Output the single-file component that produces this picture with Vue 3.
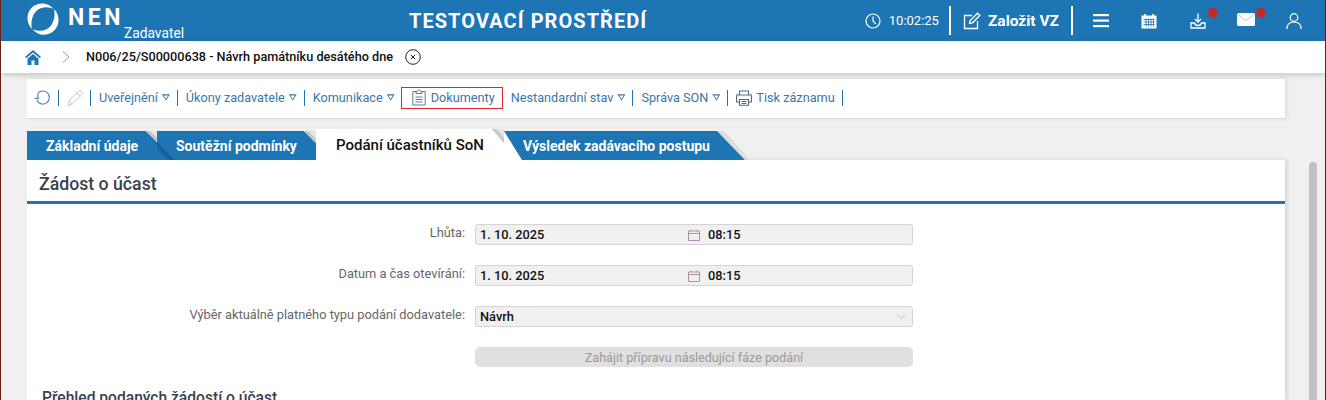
<template>
  <div class="page">
    <header class="topbar">
      <div class="brand">
        <svg class="brand__logo" viewBox="0 0 32 32" width="32" height="32">
          <path d="M17 0.500C9 -0.500 1 5 0.500 14C0.200 19 2 23 5 26C3.800 21 4.500 14 8 9.500C10.500 6.300 14 4.200 19 4.200C22 4.200 24.500 5 26.500 6C24 3 21 1 17 0.500Z" fill="#fff" />
          <path d="M15 31.700C23 32.500 31 27 31.500 18C31.800 13 30 9 27 6C28.200 11 27.500 18 24 22.500C21.500 25.700 18 27.800 13 27.800C10 27.800 7.500 27 5.500 26C8 29 11 31.300 15 31.700Z" fill="#fff" />
        </svg>
        <span class="brand__name">NEN</span>
        <span class="brand__role">Zadavatel</span>
      </div>
      <div class="topbar__env">TESTOVACÍ PROSTŘEDÍ</div>
      <div class="topbar__tools">
        <div class="clock">
          <svg viewBox="0 0 16 16" width="16" height="16" fill="none" stroke="#fff" stroke-width="1.200">
            <circle cx="8" cy="8" r="7" />
            <path d="M8 3.500V8l3 3.200" />
          </svg>
          <span>10:02:25</span>
        </div>
        <div class="create">
          <svg viewBox="0 0 18 18" width="18" height="18" fill="none" stroke="#fff" stroke-width="1.300">
            <path d="M9 3.500H1.500V16.500H14.500V9" />
            <path d="M6.500 11.500L7.200 8.500L14.500 1.200L16.800 3.500L9.500 10.800Z" />
          </svg>
          <span>Založit VZ</span>
        </div>
        <svg class="tool tool--menu" viewBox="0 0 16 14" width="16" height="14" fill="#fff">
          <rect x="0" y="0" width="16" height="2.200" />
          <rect x="0" y="5.500" width="16" height="2.200" />
          <rect x="0" y="11" width="16" height="2.200" />
        </svg>
        <svg class="tool tool--cal" viewBox="0 0 16 16" width="16" height="16">
          <path d="M0.500 2.500H3V1H5V2.500H11V1H13V2.500H15.500V15.500H0.500Z" fill="#fff" />
          <path d="M2.500 6.500H13.500M2.500 9H13.500M2.500 11.500H13.500M5 5.500V13.500M7.500 5.500V13.500M10 5.500V13.500M12.500 5.500V13.500" stroke="#1e75b4" stroke-width="0.800" fill="none" />
        </svg>
        <div class="tool tool--badge tool--download">
          <svg viewBox="0 0 16 16" width="16" height="16" fill="none" stroke="#fff" stroke-width="1.300">
            <path d="M8 0.500V8.500M5 6l3 3 3-3" />
            <path d="M1 10V15H15V10H11.500C11 11.800 10 12.500 8 12.500C6 12.500 5 11.800 4.500 10Z" />
          </svg>
          <i class="dot"></i>
        </div>
        <div class="tool tool--badge tool--mail">
          <svg viewBox="0 0 18 13" width="18" height="13">
            <rect width="18" height="13" rx="1.500" fill="#fff" />
            <path d="M0.500 1.500L9 7.500L17.500 1.500" fill="none" stroke="#a9cbe4" stroke-width="1" />
          </svg>
          <i class="dot"></i>
        </div>
        <svg class="tool tool--user" viewBox="0 0 16 16" width="16" height="16" fill="none" stroke="#fff" stroke-width="1.200">
          <circle cx="8" cy="4.500" r="3.800" />
          <path d="M0.800 16C1 11.500 4 9 8 9C12 9 15 11.500 15.200 16" />
        </svg>
      </div>
    </header>

    <div class="crumbs">
      <svg class="crumbs__home" viewBox="0 0 16 15" width="16" height="15">
        <path d="M8 0L0 7L1.200 8.300L8 2.400L14.800 8.300L16 7Z" fill="#1e75b4" />
        <path d="M2.500 8.800L8 4L13.500 8.800V15H9.500V10.500H6.500V15H2.500Z" fill="#1e75b4" />
      </svg>
      <svg class="crumbs__sep" viewBox="0 0 8 12" width="8" height="12" fill="none" stroke="#8f9aa5" stroke-width="1">
        <path d="M1 0.500L7 6L1 11.500" />
      </svg>
      <span class="crumbs__title">N006/25/S00000638 - Návrh památníku desátého dne</span>
      <svg class="crumbs__close" viewBox="0 0 16 16" width="16" height="16" fill="none" stroke="#222" stroke-width="1">
        <circle cx="8" cy="8" r="7.300" />
        <path d="M5.800 5.800L10.200 10.200M10.200 5.800L5.800 10.200" />
      </svg>
    </div>

    <main class="content">
      <nav class="toolbar">
        <svg class="toolbar__icon" viewBox="0 0 17 16" width="17" height="16" fill="none" stroke="#4a7db0" stroke-width="1.100">
          <path d="M4 3.200A6.500 6.500 0 1 1 2.800 10" />
          <path d="M0.500 8.500H5M4 3.200L3.800 8.500" />
        </svg>
        <i class="bar"></i>
        <svg class="toolbar__icon" viewBox="0 0 16 16" width="16" height="16" fill="none" stroke="#c9c9c9" stroke-width="1">
          <path d="M1 15.500L2 11L11.500 1.500C12.500 0.500 14 0.500 15 1.500C15.800 2.500 15.500 3.800 14.800 4.500L5.200 14.200Z" />
          <path d="M2 11L5.200 14.200M10 3L13.300 6.300" />
        </svg>
        <i class="bar"></i>
        <a class="menu">Uveřejnění<b class="caret"></b></a>
        <i class="bar"></i>
        <a class="menu">Úkony zadavatele<b class="caret"></b></a>
        <i class="bar"></i>
        <a class="menu">Komunikace<b class="caret"></b></a>
        <a class="menu menu--doc">
          <svg viewBox="0 0 14 17" width="14" height="17" fill="none" stroke="#5c7ea6" stroke-width="1">
            <path d="M4 2.500H0.800V16H13.200V2.500H10" />
            <path d="M4 4.500V2.500H5.500C5.500 0.300 8.500 0.300 8.500 2.500H10V4.500Z" />
            <path d="M3.500 8H10.500M3.500 10.500H10.500M3.500 13H10.500" />
          </svg>
          Dokumenty
        </a>
        <a class="menu">Nestandardní stav<b class="caret"></b></a>
        <i class="bar"></i>
        <a class="menu">Správa SON<b class="caret"></b></a>
        <i class="bar"></i>
        <a class="menu menu--print">
          <svg viewBox="0 0 16 16" width="16" height="16" fill="none" stroke="#4a6d8c" stroke-width="1.100">
            <path d="M3.500 5V1H12.500V5" />
            <path d="M3.500 12H0.600V5H15.400V12H12.500" />
            <path d="M3.500 9.500H12.500V15.300H3.500Z" />
            <path d="M5.500 11.500H10.500M5.500 13.500H10.500" />
          </svg>
          Tisk záznamu
        </a>
        <i class="bar"></i>
      </nav>

      <div class="tabs">
        <div
          v-for="tab in tabs"
          :key="tab.label"
          class="tab"
          :class="{ 'tab--active': tab.active }"
          :style="{ width: tab.width + 'px', paddingLeft: tab.indent + 'px' }"
        >
          <svg class="tab__bg" :width="tab.width" :height="tab.active ? 31 : 29">
            <polygon v-for="part in tab.parts" :key="part[0]" :points="part[0]" :fill="part[1]" />
          </svg>
          <span class="tab__label">{{ tab.label }}</span>
        </div>
      </div>

      <section class="panel">
        <h2 class="panel__title">Žádost o účast</h2>
        <form class="form">
          <div class="form__row">
            <label class="form__label">Lhůta:</label>
            <div class="field">
              <span class="field__date">1. 10. 2025</span>
              <svg class="field__cal" viewBox="0 0 12 12" width="12" height="12" fill="none" stroke="#b08fa8" stroke-width="1">
                <path d="M0.500 2H11.500V11.500H0.500ZM0.500 4.500H11.500M3 0.500V2M9 0.500V2" />
              </svg>
              <span>08:15</span>
            </div>
          </div>
          <div class="form__row">
            <label class="form__label">Datum a čas otevírání:</label>
            <div class="field">
              <span class="field__date">1. 10. 2025</span>
              <svg class="field__cal" viewBox="0 0 12 12" width="12" height="12" fill="none" stroke="#b08fa8" stroke-width="1">
                <path d="M0.500 2H11.500V11.500H0.500ZM0.500 4.500H11.500M3 0.500V2M9 0.500V2" />
              </svg>
              <span>08:15</span>
            </div>
          </div>
          <div class="form__row">
            <label class="form__label">Výběr aktuálně platného typu podání dodavatele:</label>
            <div class="field field--select">
              <span>Návrh</span>
              <svg viewBox="0 0 10 6" width="10" height="6" fill="none" stroke="#bdbdbd" stroke-width="1">
                <path d="M1 0.800L5 4.800L9 0.800" />
              </svg>
            </div>
          </div>
          <div class="form__row">
            <span class="form__label"></span>
            <button type="button" class="start-btn" disabled>Zahájit přípravu následující fáze podání</button>
          </div>
        </form>
        <h3 class="panel__subtitle">Přehled podaných žádostí o účast</h3>
      </section>
    </main>

    <div class="scrollbar"></div>
  </div>
</template>

<script setup>
const blue = '#1e75b4'

// tab shapes: [points, fill], painted in order
const tabs = [
  {
    label: 'Základní údaje',
    width: 130,
    indent: 19,
    parts: [
      ['0,0 119,0 130,11 130,29 0,29', blue],
      ['119,0 130,0 130,11', '#e4e4e4'],
      ['119,0 123,0 130,7 130,11', '#c4c4c4'],
    ],
  },
  {
    label: 'Soutěžní podmínky',
    width: 159,
    indent: 19,
    parts: [
      ['0,0 147,0 159,12 159,29 0,29', blue],
      ['0,11 17,29 9,29 0,19', '#1b6ca7'],
      ['0,11 17,29 13,29 0,15', '#165c8f'],
      ['147,0 159,0 159,12', '#e4e4e4'],
      ['147,0 151,0 159,8 159,12', '#c4c4c4'],
    ],
  },
  {
    label: 'Podání účastníků SoN',
    width: 188,
    indent: 20,
    active: true,
    parts: [
      ['0,0 176,0 188,14 188,31 0,31', '#fff'],
      ['176,0 188,0 188,14', '#e4e4e4'],
      ['176,0 180,0 188,9 188,14', '#c8c8c8'],
    ],
  },
  {
    label: 'Výsledek zadávacího postupu',
    width: 241,
    indent: 19,
    parts: [
      ['0,0 18,29 0,29', '#fff'],
      ['213,0 220,0 246,29 241,29', '#dedede'],
      ['0,0 213,0 241,29 18,29', blue],
    ],
  },
]
</script>

<style>
html,
body {
  margin: 0;
  overflow: hidden;
}
</style>

<style scoped>
.page {
  position: relative;
  box-sizing: border-box;
  height: 400px;
  overflow: hidden;
  background: #f0f0f0;
  border-left: 1px solid #6b1d14;
  border-right: 1px solid #6b1d14;
  font-family: Roboto, "Liberation Sans", sans-serif;
}

.topbar {
  position: relative;
  display: flex;
  align-items: center;
  height: 41px;
  background: #1e75b4;
  color: #fff;
}

.brand {
  display: flex;
  align-items: flex-start;
  width: 360px;
  height: 41px;
  padding-left: 26px;
  box-sizing: border-box;
}

.brand__logo {
  margin-top: 3px;
}

.brand__name {
  margin: 5px 0 0 9px;
  font-size: 23px;
  line-height: 26px;
  font-weight: 700;
  letter-spacing: 3.500px;
}

.brand__role {
  margin: 25px 0 0 0;
  font-size: 13.800px;
  line-height: 16px;
}

.topbar__env {
  width: 288px;
  margin-left: 48px;
  font-size: 20px;
  font-weight: 700;
  letter-spacing: 1.050px;
  white-space: nowrap;
}

.topbar__tools {
  display: flex;
  align-items: center;
  margin-left: auto;
  height: 41px;
  padding-right: 23px;
}

.clock {
  display: flex;
  align-items: center;
  gap: 8px;
  height: 29px;
  padding-right: 10px;
  border-right: 2px solid #fff;
  font-size: 13px;
}

.create {
  display: flex;
  align-items: center;
  gap: 7px;
  height: 29px;
  margin-left: 12px;
  padding-right: 12px;
  border-right: 2px solid #fff;
  font-size: 15.500px;
  font-weight: 700;
}

.tool {
  flex: none;
}

.tool--menu {
  margin-left: 20px;
}

.tool--cal {
  margin-left: 32px;
}

.tool--badge {
  position: relative;
  display: flex;
}

.tool--download {
  margin-left: 33px;
}

.tool--mail {
  margin-left: 31px;
  margin-bottom: 2px;
}

.tool--user {
  margin-left: 31px;
}

.dot {
  position: absolute;
  top: -5px;
  right: -12px;
  width: 10px;
  height: 10px;
  border-radius: 50%;
  background: #c62828;
}

.tool--mail .dot {
  top: -5px;
  right: -11px;
}

.crumbs {
  position: relative;
  display: flex;
  align-items: center;
  height: 32px;
  padding-left: 24px;
  background: #fff;
  box-shadow: 0 2px 6px rgba(0, 0, 0, 0.18);
}

.crumbs__sep {
  margin-left: 21px;
}

.crumbs__title {
  margin: 0 0 2px 16px;
  font-size: 12.660px;
  font-weight: 500;
  color: #111;
  white-space: nowrap;
}

.crumbs__close {
  margin-left: 12px;
}

.content {
  padding: 6px 40px 0 26px;
}

.toolbar {
  display: flex;
  align-items: center;
  height: 40px;
  padding: 0 0 2px 7px;
  background: #fff;
  border-bottom: 1px solid #dcdcdc;
  box-shadow: 2px 0 4px rgba(0, 0, 0, 0.08);
  box-sizing: border-box;
  color: #3b76a8;
  font-size: 12.700px;
}

.toolbar__icon {
  flex: none;
}

.bar {
  flex: none;
  width: 1px;
  height: 16px;
  margin: 0 8px 0 7px;
  background: #1e75b4;
}

.menu {
  display: flex;
  align-items: center;
  white-space: nowrap;
}

.caret {
  width: 8px;
  height: 8px;
  margin-left: 4px;
  background: #3b76a8;
  clip-path: polygon(0 10%, 100% 10%, 50% 90%, 38% 68%, 50% 68%, 78% 24%, 22% 24%, 50% 68%, 38% 68%);
}

.menu--doc {
  gap: 5px;
  height: 22px;
  padding: 0 7px 0 10px;
  margin: 0 8px 0 6px;
  border: 1px solid #e0262c;
  box-sizing: border-box;
}

.menu--print {
  gap: 4px;
}

.tabs {
  display: flex;
  align-items: flex-end;
  height: 31px;
  margin-top: 10px;
}

.tab {
  position: relative;
  display: flex;
  align-items: center;
  flex: none;
  height: 29px;
  box-sizing: border-box;
  color: #fff;
  font-size: 14px;
  font-weight: 700;
  white-space: nowrap;
}

.tab__bg {
  position: absolute;
  top: 0;
  left: 0;
  overflow: visible;
}

.tab__label {
  position: relative;
}

.tab--active {
  height: 31px;
  color: #111;
  font-size: 15px;
  font-weight: 500;
}

.panel {
  height: 240px;
  background: #fff;
  box-shadow: 2px 0 4px rgba(0, 0, 0, 0.12);
}

.panel__title {
  margin: 0;
  height: 44px;
  padding: 8px 0 0 12px;
  box-sizing: border-box;
  border-bottom: 3px solid #1e75b4;
  color: #39424e;
  font-size: 17.700px;
  line-height: 33px;
  font-weight: 500;
}

.form {
  display: flex;
  flex-direction: column;
  gap: 20px;
  padding-top: 20px;
}

.form__row {
  display: flex;
  align-items: flex-start;
  height: 21px;
}

.form__label {
  width: 448px;
  padding-right: 10px;
  box-sizing: border-box;
  line-height: 17px;
  text-align: right;
  color: #666;
  font-size: 12.800px;
  white-space: nowrap;
}

.field {
  display: flex;
  align-items: center;
  width: 438px;
  height: 21px;
  padding: 0 4px;
  box-sizing: border-box;
  background: #f0f0f0;
  border: 1px solid #d4d4d4;
  border-radius: 3px;
  color: #111;
  font-size: 12.800px;
  font-weight: 500;
}

.field__date {
  width: 208px;
}

.field__cal {
  margin-right: 8px;
}

.field--select {
  justify-content: space-between;
  padding-right: 6px;
}

.start-btn {
  width: 438px;
  height: 20px;
  padding: 0;
  border: none;
  border-radius: 5px;
  background: #e0e0e0;
  color: #9a9a9a;
  font-family: inherit;
  font-size: 12.600px;
}

.panel__subtitle {
  margin: 21px 0 0 15px;
  color: #39424e;
  font-size: 15.600px;
  line-height: 18px;
  font-weight: 500;
  white-space: nowrap;
}

.scrollbar {
  position: absolute;
  top: 162px;
  right: 8px;
  width: 8px;
  bottom: 0;
  border-radius: 4px 4px 0 0;
  background: #c1c1c1;
}
</style>
